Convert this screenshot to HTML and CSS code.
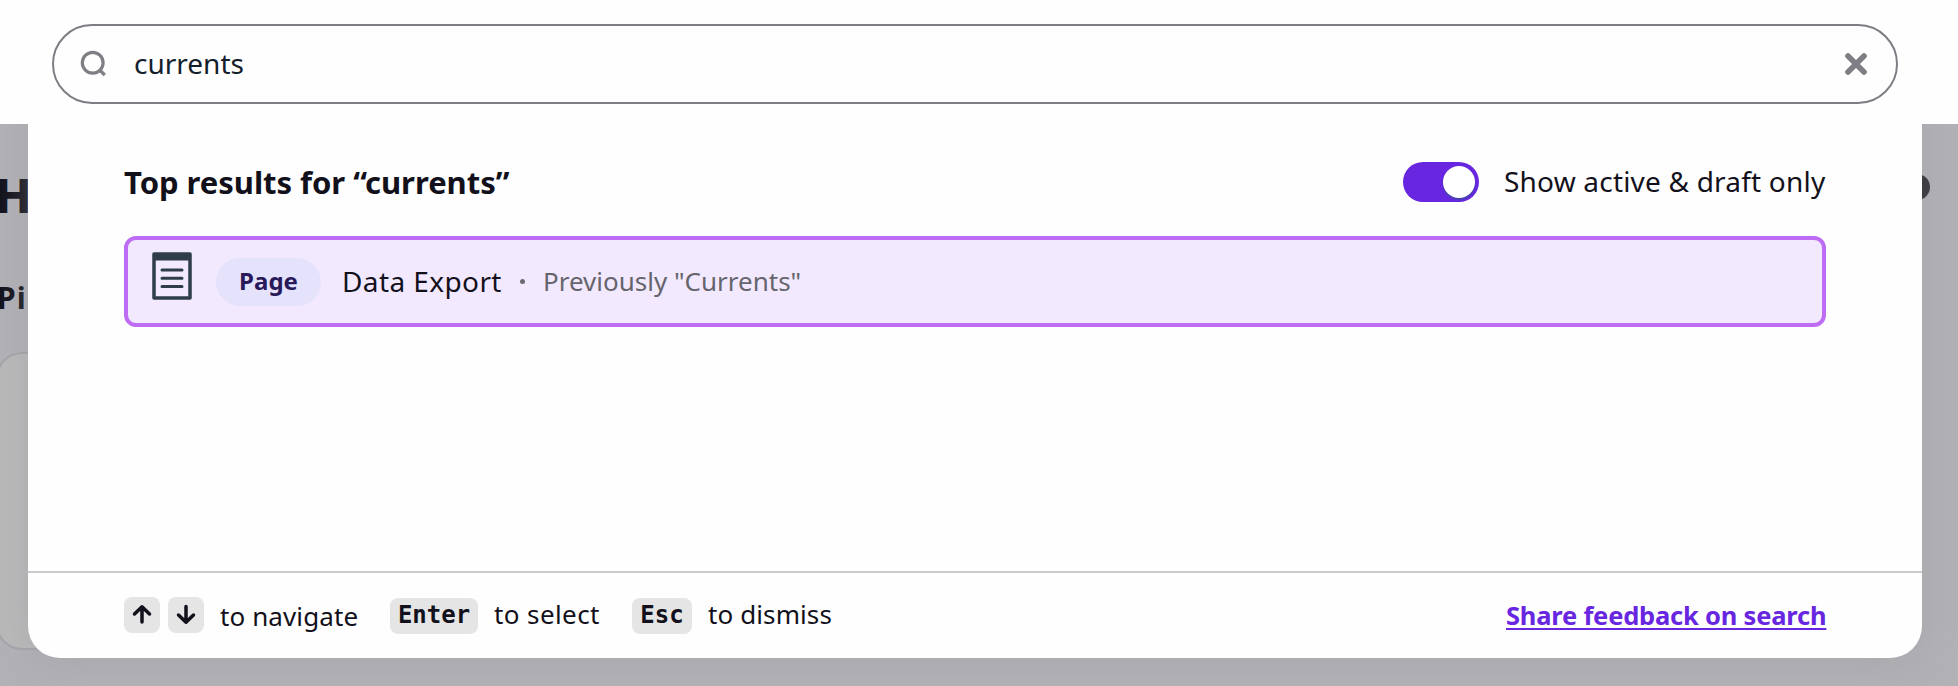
FILE: index.html
```html
<!DOCTYPE html>
<html lang="en">
<head>
<meta charset="utf-8">
<title>Search</title>
<link rel="stylesheet" href="styles.css">
</head>
<body>
<div class="topbar"></div>
<div class="backdrop">
  <div class="page-title">H</div>
  <div class="page-sub">Pi</div>
  <div class="page-card"></div>
</div>
<div class="modal-shadow"></div>
<span class="page-dot"></span>
<main class="modal">
  <div class="search">
    <svg class="search-icon" viewBox="0 0 30 30"><circle cx="14.7" cy="13.800" r="10.400"/><path d="M21 20.500 26.800 26"/></svg>
    <span class="query">currents</span>
    <svg class="clear-icon" viewBox="0 0 24 24"><path d="M4 4 20 20M20 4 4 20"/></svg>
  </div>
  <section class="results">
    <header class="results-head">
      <h2 class="heading">Top results for “currents”</h2>
      <span class="toggle"><span class="knob"></span></span>
      <span class="toggle-label">Show active &amp; draft only</span>
    </header>
    <div class="result">
      <svg class="page-icon" viewBox="0 0 40 48"><path class="outline" d="M2 2h36v44H2z"/><path class="band" d="M2 2h36v6.500H2z"/><path class="lines" d="M10 18h20M10 26.200h20M10 34.400h20"/></svg>
      <span class="pill">Page</span>
      <span class="name">Data Export</span>
      <span class="bullet"></span>
      <span class="previous">Previously "Currents"</span>
    </div>
  </section>
  <footer class="footer">
    <kbd class="key arrow"><svg viewBox="0 0 36 36"><path d="M18 25V10M10.500 17 18 9.800 25.500 17"/></svg></kbd>
    <kbd class="key arrow"><svg viewBox="0 0 36 36"><path d="M18 9.500V25M10.500 18 18 25.200 25.500 18"/></svg></kbd>
    <span class="hint navigate">to navigate</span>
    <kbd class="key enter">Enter</kbd>
    <span class="hint select">to select</span>
    <kbd class="key esc">Esc</kbd>
    <span class="hint dismiss">to dismiss</span>
    <a class="feedback">Share feedback on search</a>
  </footer>
</main>
</body>
</html>
```
FILE: styles.css
```css
* { box-sizing: border-box; }
html { height: 686px; overflow: hidden; }
body {
  margin: 0;
  width: 1958px;
  height: 686px;
  overflow: hidden;
  position: relative;
  background: #b2b1b6;
  color: #12111b;
  font-family: "Noto Sans", sans-serif;
  white-space: nowrap;
}
svg { display: block; flex: none; }
.topbar { position: absolute; inset: 0 0 auto 0; height: 124px; background: #fefefe; z-index: 1; }
.backdrop { position: absolute; inset: 124px 0 0 0; overflow: hidden; }
.page-title { position: absolute; left: -5px; top: 39px; font-size: 48px; line-height: 64px; font-weight: 800; }
.page-sub { position: absolute; left: -3px; top: 153px; font-size: 30px; line-height: 41px; font-weight: 700; letter-spacing: 1.2px; }
.page-card { position: absolute; left: -4px; top: 228px; width: 500px; height: 298px; border: 2px solid #a5a4a9; border-radius: 26px; background: #bab9ba; }
.page-dot { position: absolute; left: 1904px; top: 174px; width: 26px; height: 26px; border-radius: 50%; background: #3e3e43; }
.modal-shadow { position: absolute; left: 28px; top: 0; width: 1894px; height: 658px; border-radius: 0 0 32px 32px; box-shadow: 0 4px 36px rgba(150, 156, 160, .45); }
.modal {
  position: relative;
  z-index: 2;
  width: 1894px;
  height: 658px;
  margin: 0 auto 0 28px;
  background: #fefefe;
  border-radius: 0 0 32px 32px;
  display: flex;
  flex-direction: column;
}
.search {
  margin: 24px 24px 0;
  height: 80px;
  flex: none;
  border: 2px solid #7e7d83;
  border-radius: 40px;
  display: flex;
  align-items: center;
  padding: 0 28px 0 24px;
}
.search-icon { width: 30px; height: 30px; fill: none; stroke: #7f7e84; stroke-width: 3.200; }
.clear-icon { width: 24px; height: 24px; fill: none; stroke: #7f7e84; stroke-width: 5.600; stroke-linecap: round; margin-left: auto; }
.query { margin: 0 0 2px 26px; font-size: 28px; line-height: 38px; color: #13202b; }
.results { flex: 1; padding: 58px 96px 0; }
.results-head { display: flex; align-items: center; height: 40px; }
.heading { margin: 0 0 1px; font-size: 31px; line-height: 40px; font-weight: 700; letter-spacing: -.04px; }
.toggle { margin-left: auto; width: 76px; height: 40px; border-radius: 20px; background: #6826e0; padding: 4px; display: flex; justify-content: flex-end; }
.knob { width: 32px; height: 32px; border-radius: 50%; background: #fff; box-shadow: 0 2px 2px rgba(40, 90, 140, .6); }
.toggle-label { width: 322px; margin: 0 0 2px 25px; font-size: 28px; line-height: 40px; letter-spacing: .2px; }
.result { margin-top: 34px; height: 91px; border: 4px solid #bd6cf3; border-radius: 12px; background: #f2e9ff; display: flex; align-items: center; padding-left: 24px; }
.page-icon { width: 40px; height: 48px; margin-top: -11px; }
.outline { fill: none; stroke: #2e3d49; stroke-width: 3.500; stroke-linejoin: round; }
.band { fill: #2e3d49; }
.lines { fill: none; stroke: #2e3d49; stroke-width: 3; stroke-linecap: round; }
.pill { margin-left: 24px; width: 105px; height: 48px; border-radius: 24px; background: #e4e3fb; color: #28195a; font-size: 24px; font-weight: 700; line-height: 46px; text-align: center; }
.name { margin: 0 0 1px 21px; width: 159px; font-size: 28px; line-height: 40px; letter-spacing: .4px; }
.bullet { width: 5px; height: 5px; border-radius: 50%; background: #6c6b72; margin-left: 19px; }
.previous { margin: 0 0 1px 18px; font-size: 26px; line-height: 40px; color: #66656c; }
.footer { height: 87px; flex: none; border-top: 2px solid #cbcbcd; padding: 24px 96px 0; display: flex; align-items: flex-start; }
.key { height: 36px; border-radius: 8px; background: #e5e5e5; font: 700 24px/34px "DejaVu Sans Mono", monospace; text-align: center; flex: none; margin-top: 1px; }
.arrow { width: 36px; margin: 0 8px 0 0; }
.arrow svg { width: 36px; height: 36px; fill: none; stroke: #12111b; stroke-width: 3.500; stroke-linecap: round; stroke-linejoin: round; }
.hint { font-size: 26px; line-height: 34px; }
.navigate { width: 169px; padding-left: 8px; padding-top: 2px; letter-spacing: .1px; }
.enter { width: 88px; margin-left: 9px; }
.select { width: 138px; margin-left: 16px; letter-spacing: .4px; }
.esc { width: 60px; }
.dismiss { margin-left: 16px; letter-spacing: .1px; }
.feedback { margin-left: auto; width: 320px; font-size: 25.500px; line-height: 36px; font-weight: 700; letter-spacing: -.2px; color: #6826e0; text-decoration: underline; text-decoration-thickness: 2px; text-underline-offset: 3px; }
```
